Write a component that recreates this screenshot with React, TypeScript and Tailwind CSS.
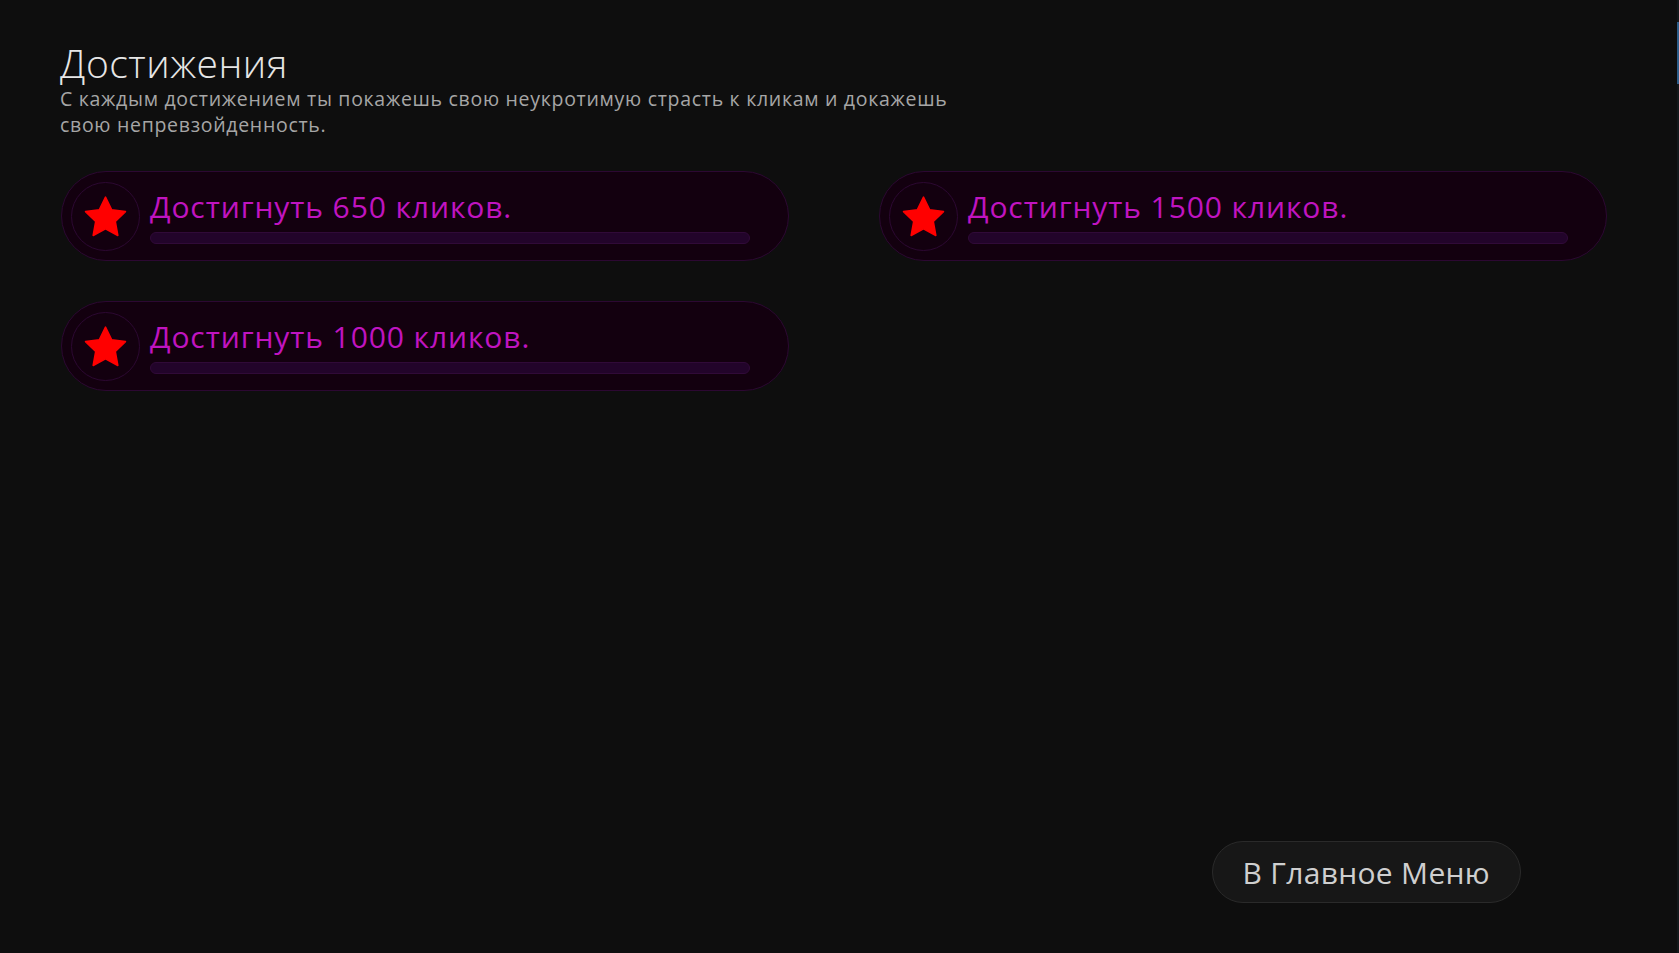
import React from 'react';

type Achievement = {
    id: number;
    title: string;
    progress: number;
};

const achievements: Achievement[] = [
    { id: 1, title: 'Достигнуть 650 кликов.', progress: 0 },
    { id: 2, title: 'Достигнуть 1500 кликов.', progress: 0 },
    { id: 3, title: 'Достигнуть 1000 кликов.', progress: 0 },
];

const Star: React.FC = () => (
    <svg width="47" height="45" viewBox="0 0 24 23" className="block">
        <polygon
            points="12,1.6 15.1,8 22.2,9 17,14 18.3,21.2 12,17.8 5.7,21.2 7,14 1.8,9 8.9,8"
            fill="#ff0000"
            stroke="#ff0000"
            strokeWidth="0.8"
            strokeLinejoin="round"
        />
    </svg>
);

const AchievementCard: React.FC<{ item: Achievement }> = ({ item }) => (
    <div className="h-[90px] rounded-full border border-[#2c0832] bg-[#13000f] flex items-center pl-[9px] pr-[38px] gap-[10px]">
        <div className="w-[69px] h-[69px] shrink-0 rounded-full border border-[#2c0832] flex items-center justify-center">
            <Star />
        </div>
        <div className="flex-1 flex flex-col gap-[9px] pt-[2px]">
            <h3 className="text-[30px] leading-[32px] text-[#c014c0] tracking-[0.9px]">{item.title}</h3>
            <div className="h-[12px] rounded-full bg-[#22042a] border border-[#300a38]">
                <div className="h-full rounded-full bg-[#c014c0]" style={{ width: `${item.progress}%` }} />
            </div>
        </div>
    </div>
);

const App: React.FC = () => {
    return (
        <div className="min-h-screen w-full bg-[#0e0e0e] flex font-['Open_Sans','Noto_Sans',sans-serif]">
            <div className="flex-1 flex flex-col pl-[60px] pr-[70px] pt-[41px] pb-[50px]">
                <header>
                    <h1 className="text-[39px] leading-[44px] font-light text-[#e6e6e6] tracking-[0.5px]">Достижения</h1>
                    <p className="text-[19.5px] leading-[26px] text-[#a6a6a6] tracking-[0.7px] mt-[1px]">
                        С каждым достижением ты покажешь свою неукротимую страсть к кликам и докажешь
                        <br />
                        свою непревзойденность.
                    </p>
                </header>

                <div className="grid grid-cols-2 gap-x-[90px] gap-y-[40px] mt-[33px] ml-[1px]">
                    {achievements.map(a => (
                        <AchievementCard key={a.id} item={a} />
                    ))}
                </div>

                <div className="mt-auto flex justify-end pr-[86px]">
                    <button className="h-[62px] px-[30px] rounded-full bg-[#171717] border border-[#2a2a2a] text-[30px] tracking-[0.3px] text-[#cfcfcf] cursor-pointer">
                        В Главное Меню
                    </button>
                </div>
            </div>

            <aside className="w-[2px] bg-[#13181b] shrink-0">
                <div className="mt-[22px] h-[62px] bg-[#2d5d8a]" />
            </aside>
        </div>
    );
};

export default App;
